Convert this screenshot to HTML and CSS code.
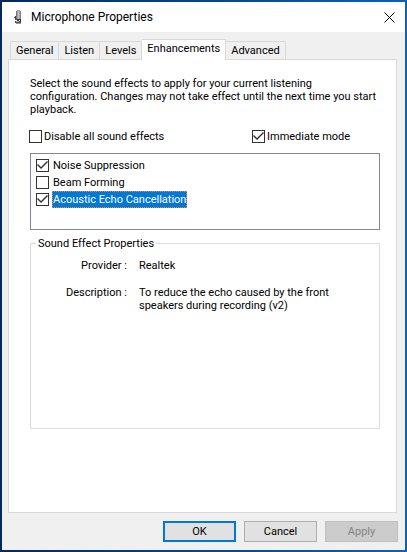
FILE: index.html
```html
<!DOCTYPE html>
<html lang="en">
<head>
    <meta charset="utf-8">
    <meta name="viewport" content="width=device-width, initial-scale=1">
    <title>Microphone Properties</title>
    <link rel="stylesheet" href="styles.css">
</head>
<body>
    <main class="dialog">
        <header class="title-bar">
            <svg class="mic-icon" width="9" height="15" viewBox="0 0 9 15" shape-rendering="crispEdges" aria-hidden="true">
                <path d="M2 1h1V0h3v1h1v9H2z" fill="#a3a3a3"/>
                <path d="M2 1h1v8H2z" fill="#777"/>
                <path d="M6 1h1v8H6z" fill="#858585"/>
                <path d="M4 1h1v7H4z" fill="#c4c4c4"/>
                <path d="M1 6h1v3H1zM0 7h1v1H0zM1 9h5v1H1z" fill="#444"/>
                <path d="M3 10h2v1H3zM6 9h1v2H6z" fill="#333"/>
                <path d="M1 11h6v2H1z" fill="#4d4d4d"/>
                <path d="M2 11h3v1H2z" fill="#bbb"/>
                <path d="M2 13h5v1H2z" fill="#999"/>
            </svg>
            <h1>Microphone Properties</h1>
            <button type="button" class="close-button" aria-label="Close">
                <svg width="11" height="11" viewBox="0 0 11 11" aria-hidden="true">
                    <path d="M.5 .5l10 10M10.500 .5l-10 10" fill="none" stroke="#000"/>
                </svg>
            </button>
        </header>

        <div class="tabs" role="tablist">
            <button type="button" class="tab" role="tab">General</button>
            <button type="button" class="tab" role="tab">Listen</button>
            <button type="button" class="tab" role="tab">Levels</button>
            <button type="button" class="tab tab-active" role="tab" aria-selected="true">Enhancements</button>
            <button type="button" class="tab" role="tab">Advanced</button>
        </div>

        <section class="panel" role="tabpanel">
            <p class="intro">Select the sound effects to apply for your current listening configuration. Changes may not take effect until the next time you start playback.</p>

            <div class="options">
                <label class="check"><input type="checkbox"><span>Disable all sound effects</span></label>
                <label class="check"><input type="checkbox" checked><span>Immediate mode</span></label>
            </div>

            <ul class="effects">
                <li><label class="check"><input type="checkbox" checked><span>Noise Suppression</span></label></li>
                <li><label class="check"><input type="checkbox"><span>Beam Forming</span></label></li>
                <li><label class="check selected"><input type="checkbox" checked><span>Acoustic Echo Cancellation</span></label></li>
            </ul>

            <fieldset class="properties">
                <legend>Sound Effect Properties</legend>
                <dl>
                    <dt>Provider :</dt>
                    <dd>Realtek</dd>
                    <dt>Description :</dt>
                    <dd>To reduce the echo caused by the front speakers during recording (v2)</dd>
                </dl>
            </fieldset>
        </section>

        <footer class="buttons">
            <button type="button" class="button button-default">OK</button>
            <button type="button" class="button">Cancel</button>
            <button type="button" class="button" disabled>Apply</button>
        </footer>
    </main>
</body>
</html>
```
FILE: styles.css
```css
* {
    box-sizing: border-box;
}

body {
    display: flex;
    min-height: 100vh;
    margin: 0;
    padding: 2px;
    background: linear-gradient(to right, #012a5c, #0a63b4);
    color: #000;
    font: 11px/13px Roboto, Tahoma, sans-serif;
}

button {
    padding: 0;
    color: inherit;
    font: inherit;
}

.dialog {
    display: flex;
    flex: 1;
    flex-direction: column;
    min-width: 0;
    background: #f0f0f0;
}

/* Title bar */
.title-bar {
    display: flex;
    align-items: center;
    height: 30px;
    padding: 0 10px 0 12px;
    background: #fff;
}

.title-bar h1 {
    flex: 1;
    margin: 0 0 0 8px;
    font: 12px/16px Roboto, "Segoe UI", sans-serif;
}

.close-button {
    display: flex;
    border: none;
    background: none;
}

/* Tabs */
.tabs {
    display: flex;
    align-items: flex-end;
    margin: 7px 8px 0;
}

.tab {
    height: 18px;
    padding: 0 5px;
    border: 1px solid #d9d9d9;
    border-width: 1px 1px 0 0;
    background: #f0f0f0;
}

.tab:first-child {
    border-left-width: 1px;
}

.tab-active {
    z-index: 1;
    height: 21px;
    margin-bottom: -1px;
    padding-bottom: 3px;
    background: #fff;
}

.panel {
    flex: 1;
    margin: 0 8px 0 6px;
    padding: 17px 16px 20px 21px;
    border: 1px solid #d9d9d9;
    background: #fff;
}

.intro {
    margin: 0;
}

/* Check boxes */
.check {
    display: flex;
    align-items: center;
}

.check input {
    display: grid;
    flex: none;
    width: 13px;
    height: 13px;
    margin: 0;
    border: 1px solid #333;
    background: #fff;
    appearance: none;
}

.check input:checked::before {
    background: #333;
    content: "";
    clip-path: polygon(0 5px, 1px 4px, 4px 7px, 10px 1px, 11px 2px, 4px 9px);
}

.check span {
    padding: 0 2px;
}

.options {
    display: grid;
    grid-template-columns: 223px 1fr;
    margin: 14px 0 10px -1px;
}

.effects {
    height: 77px;
    margin: 0;
    padding: 3px 5px;
    border: 1px solid #828790;
    list-style: none;
}

.effects .check {
    height: 17px;
}

.effects span {
    margin-left: 3px;
    padding: 1px 0;
    border: 1px solid transparent;
}

.effects .selected span {
    border: 1px dotted #ff8728;
    background: #0078d7;
    color: #fff;
}

/* Effect properties */
.properties {
    min-height: 192px;
    margin: 7px 0 0;
    padding: 9px 30px 0 5px;
    border: 1px solid #dcdcdc;
}

.properties legend {
    padding: 0 2px;
}

.properties dl {
    display: grid;
    grid-template-columns: 91px 1fr;
    gap: 14px 12px;
    margin: 0;
}

.properties dt {
    text-align: right;
}

.properties dd {
    margin: 0;
}

/* Dialog buttons */
.buttons {
    display: flex;
    justify-content: flex-end;
    gap: 8px;
    padding: 8px 7px;
}

.button {
    width: 73px;
    height: 21px;
    border: 1px solid #adadad;
    background: #e1e1e1;
}

.button-default {
    border: 2px solid #0078d7;
}

.button:disabled {
    border-color: #bfbfbf;
    background: #ccc;
    color: #838383;
}
```
